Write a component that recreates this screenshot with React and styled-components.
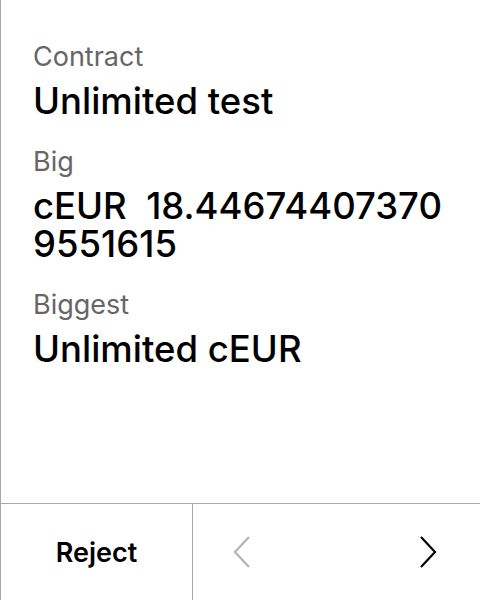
import React from "react";
import styled, { createGlobalStyle } from "styled-components";

const GlobalStyle = createGlobalStyle`
  html, body {
    margin: 0;
    padding: 0;
    background: #ffffff;
  }
  body {
    font-family: Inter, "Noto Sans", sans-serif;
  }
`;

const Screen = styled.div`
  width: 480px;
  height: 600px;
  display: flex;
  flex-direction: column;
  border-left: 1px solid #a8a8a8;
  box-sizing: border-box;
`;

const Content = styled.div`
  flex: 1;
  padding: 41px 24px 0 32px;
  display: flex;
  flex-direction: column;
  gap: 26px;
`;

const Field = styled.div`
  display: flex;
  flex-direction: column;
  gap: 9px;
`;

const Label = styled.div`
  color: #666666;
  font-size: 27px;
  line-height: 32px;
`;

const Value = styled.div`
  color: #000000;
  font-size: 36.5px;
  font-weight: 500;
  line-height: 38px;
  word-break: break-all;
  white-space: pre-wrap;
`;

const Footer = styled.div`
  height: 96px;
  display: flex;
  border-top: 1px solid #a8a8a8;
`;

const RejectButton = styled.button`
  width: 192px;
  border: none;
  border-right: 1px solid #a8a8a8;
  background: none;
  font-family: inherit;
  font-size: 27px;
  font-weight: 600;
  color: #000000;
  padding: 0;
`;

const Pager = styled.div`
  flex: 1;
  display: flex;
  align-items: center;
  justify-content: space-between;
  padding: 0 40px 0 37px;
`;

const ArrowButton = styled.button`
  border: none;
  background: none;
  padding: 0;
  width: 24px;
  height: 36px;
  display: flex;
  align-items: center;
  justify-content: center;
  color: ${(p) => (p.disabled ? "#b3b3b3" : "#000000")};
`;

const Chevron = ({ dir }) => (
  <svg width="20" height="34" viewBox="0 0 20 34" fill="none">
    <path
      d={dir === "left" ? "M17 2 L3 17 L17 32" : "M3 2 L17 17 L3 32"}
      stroke="currentColor"
      strokeWidth="2.2"
    />
  </svg>
);

const App = () => {
  return (
    <Screen>
      <GlobalStyle />
      <Content>
        <Field>
          <Label>Contract</Label>
          <Value>Unlimited test</Value>
        </Field>
        <Field>
          <Label>Big</Label>
          <Value>{"cEUR  18.446744073709551615"}</Value>
        </Field>
        <Field>
          <Label>Biggest</Label>
          <Value>Unlimited cEUR</Value>
        </Field>
      </Content>
      <Footer>
        <RejectButton>Reject</RejectButton>
        <Pager>
          <ArrowButton disabled>
            <Chevron dir="left" />
          </ArrowButton>
          <ArrowButton>
            <Chevron dir="right" />
          </ArrowButton>
        </Pager>
      </Footer>
    </Screen>
  );
};

export default App;
